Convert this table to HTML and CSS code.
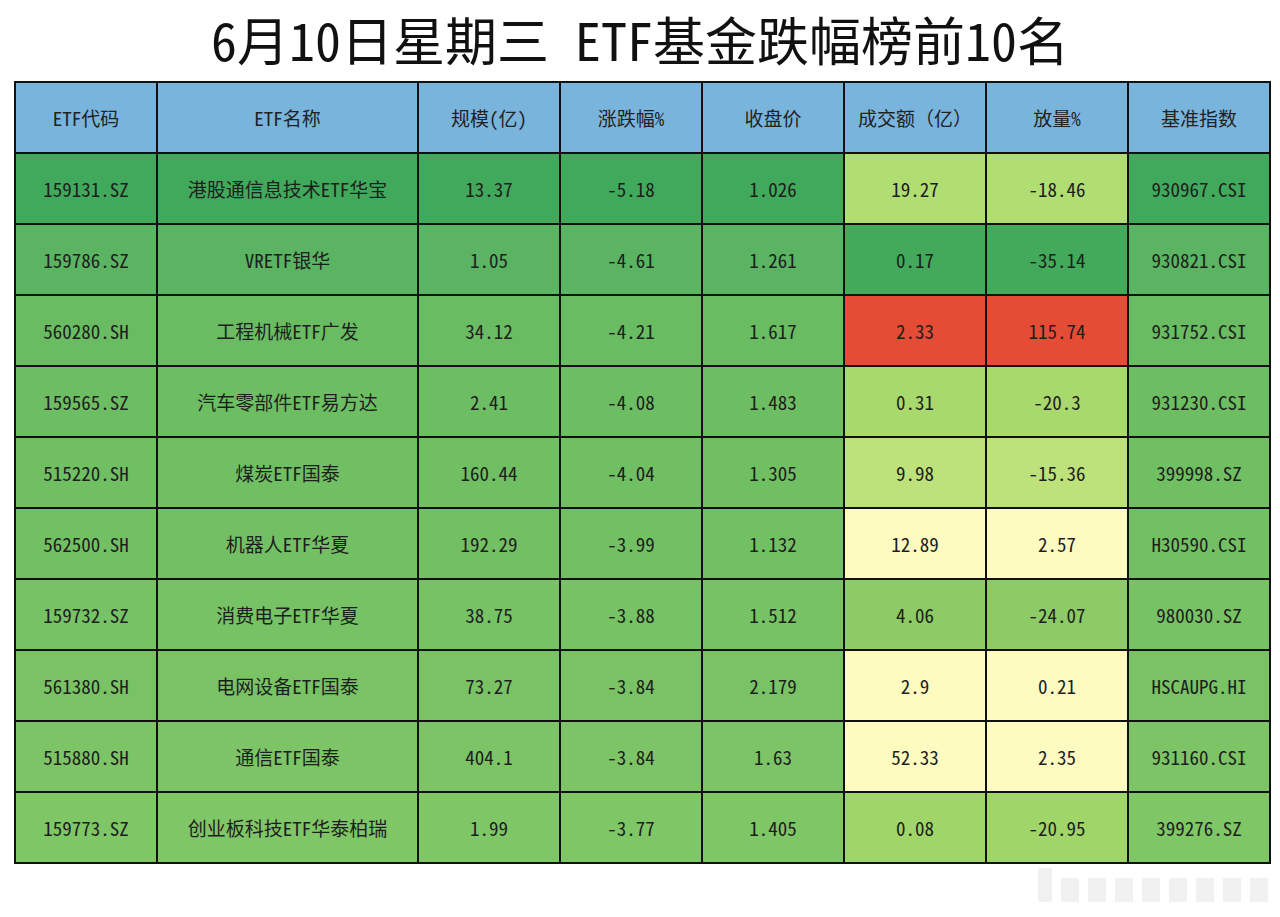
FILE: index.html
```html
<!DOCTYPE html>
<html lang="zh">
<head>
<meta charset="utf-8">
<title>ETF基金跌幅榜前10名</title>
<link rel="stylesheet" href="styles.css">
</head>
<body>
<div class="page">
  <h1 class="title">6月10日星期三 ETF基金跌幅榜前10名</h1>
  <table class="grid">
    <colgroup>
      <col class="c-code"><col class="c-name"><col class="c-num"><col class="c-num"><col class="c-num"><col class="c-num"><col class="c-num"><col class="c-num">
    </colgroup>
    <thead>
      <tr><th>ETF代码</th><th>ETF名称</th><th>规模(亿)</th><th>涨跌幅%</th><th>收盘价</th><th>成交额（亿）</th><th>放量%</th><th>基准指数</th></tr>
    </thead>
    <tbody>
      <tr class="r1"><td>159131.SZ</td><td>港股通信息技术ETF华宝</td><td>13.37</td><td>-5.18</td><td>1.026</td><td class="s-b3">19.27</td><td class="s-b3">-18.46</td><td>930967.CSI</td></tr>
      <tr class="r2"><td>159786.SZ</td><td>VRETF银华</td><td>1.05</td><td>-4.61</td><td>1.261</td><td class="s-dk">0.17</td><td class="s-dk">-35.14</td><td>930821.CSI</td></tr>
      <tr class="r3"><td>560280.SH</td><td>工程机械ETF广发</td><td>34.12</td><td>-4.21</td><td>1.617</td><td class="s-red">2.33</td><td class="s-red">115.74</td><td>931752.CSI</td></tr>
      <tr class="r4"><td>159565.SZ</td><td>汽车零部件ETF易方达</td><td>2.41</td><td>-4.08</td><td>1.483</td><td class="s-a9">0.31</td><td class="s-a9">-20.3</td><td>931230.CSI</td></tr>
      <tr class="r5"><td>515220.SH</td><td>煤炭ETF国泰</td><td>160.44</td><td>-4.04</td><td>1.305</td><td class="s-bd">9.98</td><td class="s-bd">-15.36</td><td>399998.SZ</td></tr>
      <tr class="r6"><td>562500.SH</td><td>机器人ETF华夏</td><td>192.29</td><td>-3.99</td><td>1.132</td><td class="s-yl">12.89</td><td class="s-yl">2.57</td><td>H30590.CSI</td></tr>
      <tr class="r7"><td>159732.SZ</td><td>消费电子ETF华夏</td><td>38.75</td><td>-3.88</td><td>1.512</td><td class="s-8b">4.06</td><td class="s-8b">-24.07</td><td>980030.SZ</td></tr>
      <tr class="r8"><td>561380.SH</td><td>电网设备ETF国泰</td><td>73.27</td><td>-3.84</td><td>2.179</td><td class="s-yl">2.9</td><td class="s-yl">0.21</td><td>HSCAUPG.HI</td></tr>
      <tr class="r9"><td>515880.SH</td><td>通信ETF国泰</td><td>404.1</td><td>-3.84</td><td>1.63</td><td class="s-yl">52.33</td><td class="s-yl">2.35</td><td>931160.CSI</td></tr>
      <tr class="r10"><td>159773.SZ</td><td>创业板科技ETF华泰柏瑞</td><td>1.99</td><td>-3.77</td><td>1.405</td><td class="s-a0">0.08</td><td class="s-a0">-20.95</td><td>399276.SZ</td></tr>
    </tbody>
  </table>
  <div class="mark"><span class="m1"></span><span class="m2"></span><span class="m2"></span><span class="m2"></span><span class="m2"></span><span class="m2"></span><span class="m2"></span><span class="m2"></span><span class="m2"></span></div>
</div>
</body>
</html>
```

FILE: styles.css
```css
html, body {
  margin: 0;
  padding: 0;
  background: #ffffff;
}
body {
  font-family: "Noto Sans Mono CJK SC", "Noto Sans CJK SC", "Noto Sans", monospace;
  color: #1c1c1c;
}
.page {
  width: 1280px;
  height: 917px;
  display: flex;
  flex-direction: column;
  align-items: stretch;
}
.title {
  margin: 0;
  height: 81px;
  line-height: 78px;
  font-size: 52px;
  font-weight: 400;
  text-align: center;
  color: #111;
}
.grid {
  margin-left: 14px;
  width: 1254px;
  border-collapse: collapse;
  table-layout: fixed;
  border: 2px solid #111;
}
.c-code { width: 142px; }
.c-name { width: 261px; }
.c-num { width: 142px; }
.grid th, .grid td {
  border: 2px solid #111;
  height: 69px;
  padding: 0;
  text-align: center;
  vertical-align: middle;
  font-size: 19px;
  font-weight: 400;
}
.grid th {
  background: #79b4dc;
  color: #222;
}
.grid td { color: #1e1e1e; }
.r1 td { background: #41a95b; }
.r2 td { background: #5ab462; }
.r3 td { background: #69bc62; }
.r4 td { background: #6dbe62; }
.r5 td { background: #70bf63; }
.r6 td { background: #73c064; }
.r7 td { background: #76c265; }
.r8 td { background: #79c365; }
.r9 td { background: #7cc466; }
.r10 td { background: #7fc667; }
.grid td.s-b3 { background: #b1de73; }
.grid td.s-dk { background: #43a95b; }
.grid td.s-red { background: #e54c36; }
.grid td.s-a9 { background: #a8d96c; }
.grid td.s-bd { background: #bde27b; }
.grid td.s-yl { background: #fefbc0; }
.grid td.s-8b { background: #8ccb65; }
.grid td.s-a0 { background: #a0d56a; }
.mark {
  display: flex;
  justify-content: flex-end;
  align-items: flex-end;
  gap: 9px;
  padding: 6px 12px 0 0;
  height: 32px;
}
.m1 {
  width: 14px;
  height: 34px;
  background: #f0f0f0;
  border-radius: 3px;
}
.m2 {
  width: 18px;
  height: 24px;
  background: #f1f1f1;
}
```
